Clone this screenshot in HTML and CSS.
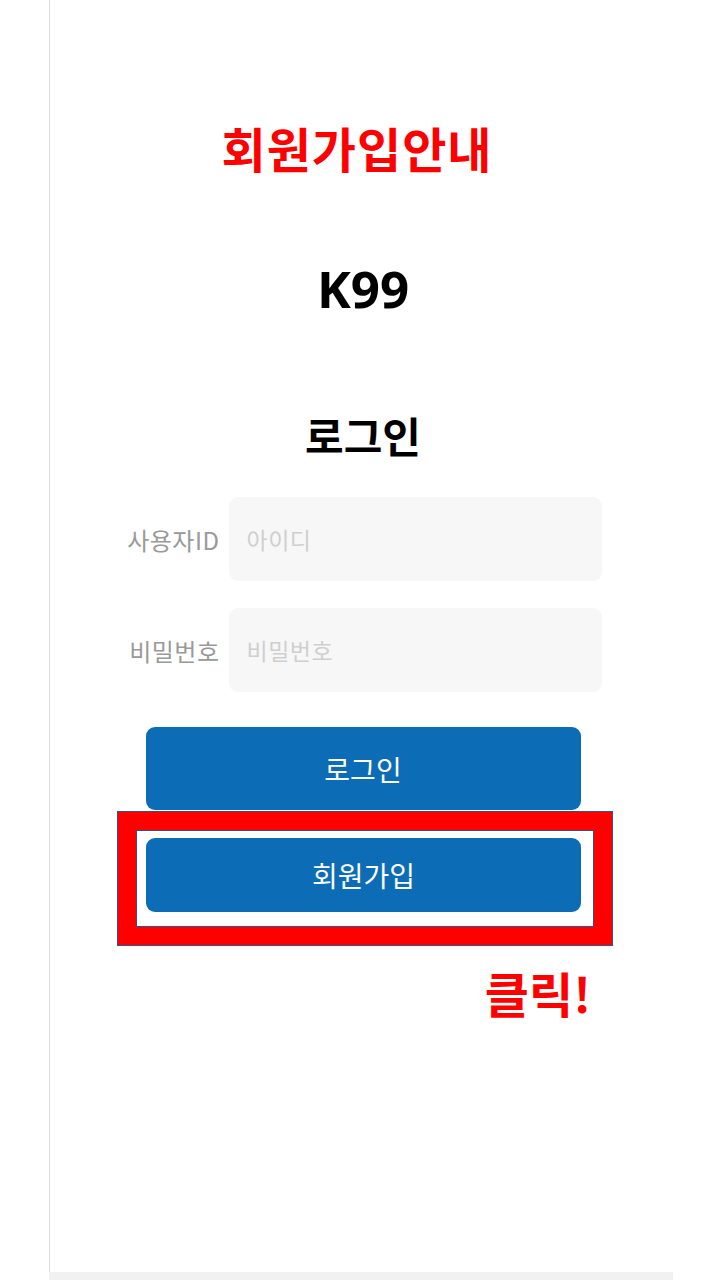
FILE: index.html
```html
<!DOCTYPE html>
<html lang="ko">
<head>
<meta charset="utf-8">
<title>회원가입안내</title>
<link rel="stylesheet" href="styles.css">
</head>
<body>
<div class="screen">
  <div class="panel">
    <h1 class="guide-title">회원가입안내</h1>
    <div class="brand">K99</div>
    <h2 class="login-title">로그인</h2>
    <form class="login-form">
      <div class="field-row">
        <label class="field-label" for="uid">사용자ID</label>
        <input class="field-input" id="uid" type="text" placeholder="아이디">
      </div>
      <div class="field-row">
        <label class="field-label" for="upw">비밀번호</label>
        <input class="field-input" id="upw" type="password" placeholder="비밀번호">
      </div>
    </form>
    <button class="btn" type="button">로그인</button>
    <div class="highlight">
      <button class="btn btn-signup" type="button">회원가입</button>
    </div>
    <div class="click-note">클릭!</div>
  </div>
  <div class="strip"></div>
</div>
</body>
</html>
```

FILE: styles.css
```css
html, body {
  margin: 0;
  padding: 0;
  background: #ffffff;
}

body {
  font-family: "Noto Sans CJK KR", "Noto Sans", sans-serif;
}

.screen {
  width: 720px;
  height: 1280px;
  overflow: hidden;
}

.panel {
  margin-left: 49px;
  width: 626px;
  height: 1272px;
  border-left: 1px solid #dcdcdc;
  background: #ffffff;
  display: flex;
  flex-direction: column;
  align-items: center;
  box-sizing: content-box;
}

.strip {
  margin-left: 49px;
  width: 624px;
  height: 8px;
  background: #f1f1f1;
}

.guide-title {
  margin: 117px 12px 0 0;
  font-size: 48px;
  line-height: 60px;
  font-weight: 700;
  letter-spacing: 1px;
  color: #ff0000;
}

.brand {
  margin-top: 81px;
  font-family: "Noto Sans", sans-serif;
  font-size: 51px;
  line-height: 60px;
  font-weight: 700;
  color: #000000;
}

.login-title {
  margin: 92px 0 0 0;
  font-size: 42px;
  line-height: 50px;
  font-weight: 700;
  color: #000000;
}

.login-form {
  margin-top: 37px;
  display: flex;
  flex-direction: column;
  gap: 27px;
}

.field-row {
  display: grid;
  grid-template-columns: 95px 373px;
  column-gap: 9px;
  align-items: center;
}

.field-label {
  text-align: right;
  font-size: 24px;
  letter-spacing: 0.5px;
  color: #999999;
  white-space: nowrap;
}

.field-input {
  height: 84px;
  box-sizing: border-box;
  border: none;
  border-radius: 9px;
  background: #f7f7f7;
  padding: 0 18px;
  font-family: "Noto Sans CJK KR", "Noto Sans", sans-serif;
  font-size: 23px;
  letter-spacing: 0.5px;
  color: #333333;
  outline: none;
}

.field-input::placeholder {
  color: #cfcfcf;
}

.btn {
  width: 435px;
  height: 83px;
  border: none;
  border-radius: 9px;
  background: #0c6cb6;
  color: #ffffff;
  font-family: "Noto Sans CJK KR", "Noto Sans", sans-serif;
  font-size: 28px;
  margin-top: 35px;
}

.highlight {
  margin: 2px 0 0 4px;
  width: 494px;
  box-sizing: border-box;
  border: 18px solid #ff0000;
  outline: 1px solid #2f528f;
  box-shadow: inset 0 0 0 1px #2f528f;
  padding: 8px 0 15px 0;
  display: flex;
  justify-content: center;
}

.btn-signup {
  margin: 0 3px 0 0;
  height: 74px;
  font-size: 28px;
}

.click-note {
  margin-top: 17px;
  width: 496px;
  margin-left: 4px;
  box-sizing: border-box;
  padding-right: 22px;
  text-align: right;
  font-size: 48px;
  line-height: 60px;
  font-weight: 700;
  color: #ff0000;
}
```
